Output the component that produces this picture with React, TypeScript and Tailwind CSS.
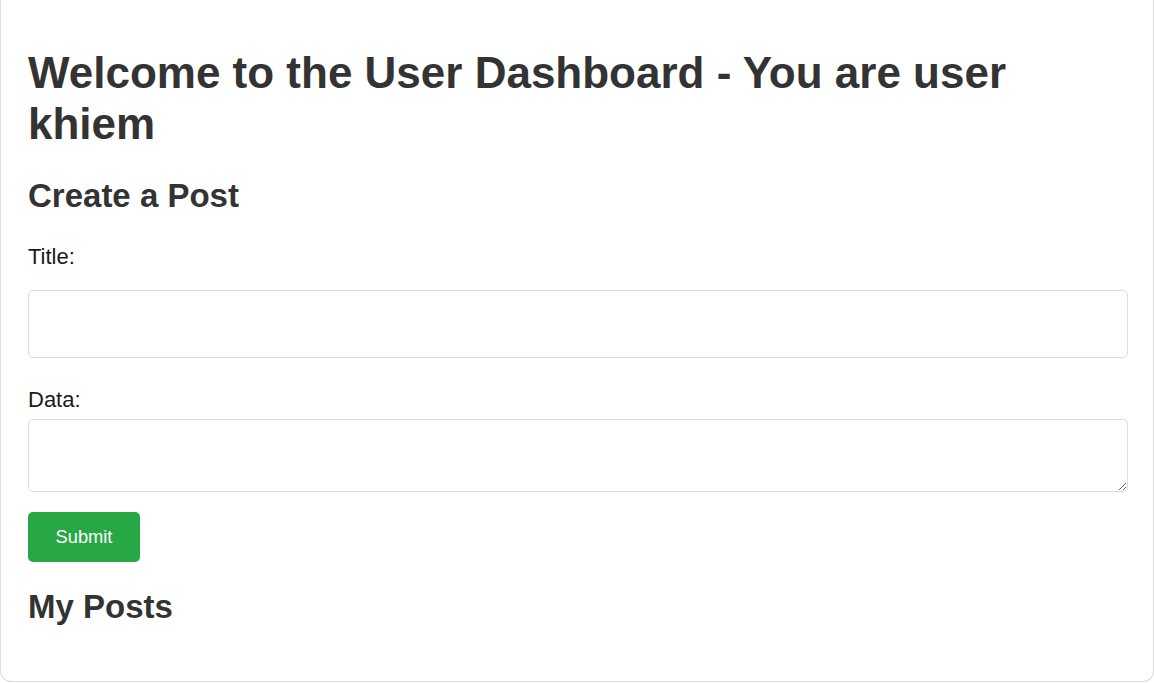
import React from "react";

export default function App() {
  return (
    <div className="w-[1154px] h-[683px] bg-white overflow-hidden" style={{ fontFamily: '"Liberation Sans", Arial, sans-serif' }}>
      <div className="w-[1154px] h-[682px] border-l border-r border-b border-[#dcdcdc] rounded-b-[11px] bg-white pl-[27px] pt-[48px] flex flex-col items-start">
        <h1 className="text-[44px] leading-[50.5px] font-bold text-[#333] w-[1000px]">
          Welcome to the User Dashboard - You are user khiem
        </h1>
        <h2 className="mt-[28px] text-[33px] leading-[38px] font-bold text-[#333]">Create a Post</h2>
        <label className="mt-[28.5px] text-[22px] leading-[25px] text-[#1a1a1a]">Title:</label>
        <input
          type="text"
          className="mt-[21.5px] w-[1100px] h-[68px] border border-[#dcdcdc] rounded-[5px] px-3 outline-none bg-white"
        />
        <label className="mt-[28.5px] text-[22px] leading-[25px] text-[#1a1a1a]">Data:</label>
        <textarea className="mt-[7.5px] w-[1100px] h-[73px] border border-[#dcdcdc] rounded-[5px] px-3 outline-none bg-white resize" />
        <button className="mt-[20px] w-[112px] h-[50px] bg-[#28a745] text-white text-[18.3px] rounded-[5px]">
          Submit
        </button>
        <h2 className="mt-[26px] text-[33px] leading-[38px] font-bold text-[#333]">My Posts</h2>
      </div>
    </div>
  );
}
